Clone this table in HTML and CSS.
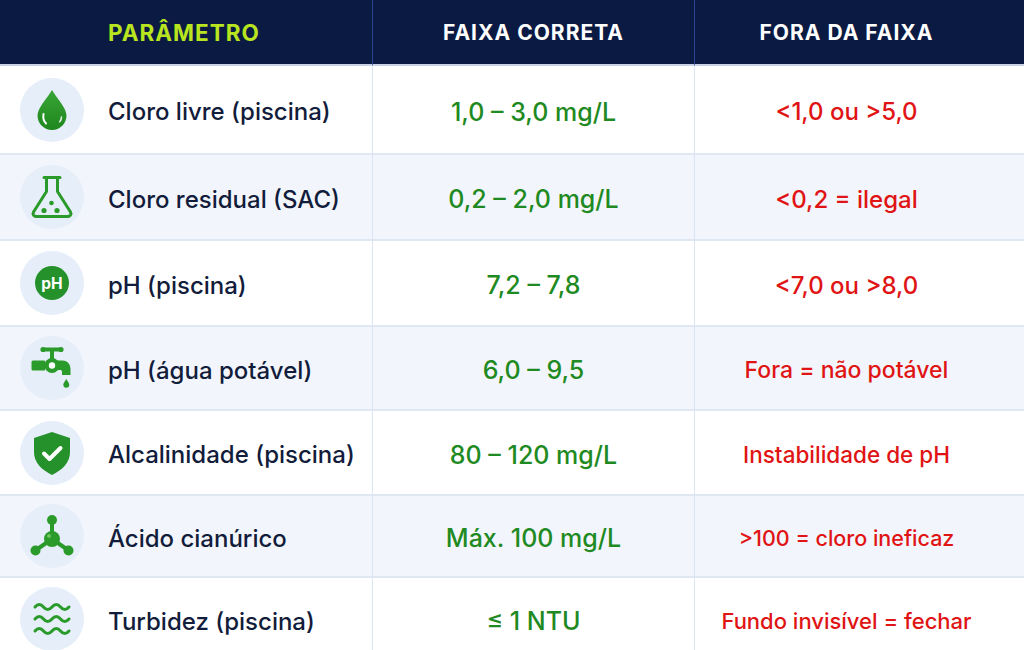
FILE: index.html
```html
<!DOCTYPE html>
<html lang="pt">
<head>
<meta charset="utf-8">
<link rel="stylesheet" href="styles.css">
</head>
<body>
<div class="table">
  <div class="hcell h1"><span class="lime">PARÂMETRO</span></div>
  <div class="hcell h2">FAIXA CORRETA</div>
  <div class="hcell h3">FORA DA FAIXA</div>

  <div class="cell param r1"><span class="ico"><svg viewBox="0 0 48 48" width="48" height="48"><defs><linearGradient id="dg" x1="0" y1="0" x2="0" y2="1"><stop offset="0" stop-color="#3aa536"/><stop offset="1" stop-color="#1e871e"/></linearGradient></defs><path d="M24 4 C20 11 9.5 22 9.5 29.5 a14.5 14.5 0 0 0 29 0 C38.5 22 28 11 24 4Z" fill="url(#dg)"/><path d="M15.5 28 q-1 6 2.5 9.5" stroke="#fff" stroke-width="2" fill="none" stroke-linecap="round"/><path d="M33.5 31 q0 3 -1.8 4.8" stroke="#fff" stroke-width="1.6" fill="none" stroke-linecap="round" opacity="0.85"/></svg></span><span class="name">Cloro livre (piscina)</span></div>
  <div class="cell ok r1">1,0 – 3,0 mg/L</div>
  <div class="cell bad c3 r1">&lt;1,0 ou &gt;5,0</div>

  <div class="cell param alt"><span class="ico"><svg viewBox="0 0 48 48" width="48" height="48"><g stroke="#2a9a2a" stroke-width="3" fill="none" stroke-linecap="round" stroke-linejoin="round"><path d="M16 4.5 h16"/><path d="M18.5 5 v13.5 L5.5 39 a3 3 0 0 0 2.6 4.5 h31.8 a3 3 0 0 0 2.6 -4.5 L29.5 18.5 V5"/></g><circle cx="16" cy="37.5" r="2.6" fill="#2a9a2a"/><circle cx="23.5" cy="30" r="2.3" fill="#2a9a2a"/><circle cx="29" cy="37.5" r="2.6" fill="#2a9a2a"/></svg></span><span class="name">Cloro residual (SAC)</span></div>
  <div class="cell ok alt">0,2 – 2,0 mg/L</div>
  <div class="cell bad c3 alt">&lt;0,2 = ilegal</div>

  <div class="cell param"><span class="ico"><svg viewBox="0 0 48 48" width="48" height="48"><circle cx="24" cy="24" r="17" fill="#24912a"/><text x="24" y="29.5" text-anchor="middle" font-family="Inter, sans-serif" font-weight="700" font-size="15.5" fill="#fff">pH</text></svg></span><span class="name">pH (piscina)</span></div>
  <div class="cell ok">7,2 – 7,8</div>
  <div class="cell bad c3">&lt;7,0 ou &gt;8,0</div>

  <div class="cell param alt"><span class="ico"><svg viewBox="0 0 48 48" width="48" height="48"><g fill="#2a9a2a"><rect x="14" y="3.5" width="20" height="4" rx="2"/><circle cx="15" cy="5.5" r="2.6"/><circle cx="33" cy="5.5" r="2.6"/><rect x="22" y="5" width="4" height="10"/><rect x="3.5" y="16.5" width="14" height="10" rx="1.5"/><path d="M27 16.5 h7.5 a8 8 0 0 1 8 8 v6.5 h-8.5 v-3.5 a1.5 1.5 0 0 0 -1.5 -1.5 h-5.5 z"/><circle cx="24" cy="21.5" r="7.5"/><path d="M38.3 35 c-1.5 2.4 -3 4.2 -3 5.8 a3 3 0 0 0 6 0 c0 -1.6 -1.5 -3.4 -3 -5.8z"/></g><circle cx="24" cy="21.5" r="3.2" fill="#fff"/></svg></span><span class="name">pH (água potável)</span></div>
  <div class="cell ok alt">6,0 – 9,5</div>
  <div class="cell bad c3 alt fora">Fora = não potável</div>

  <div class="cell param"><span class="ico"><svg viewBox="0 0 48 48" width="48" height="48"><path d="M24 3 L42 9 V23 C42 34 34 41 24 46 C14 41 6 34 6 23 V9 Z" fill="#24912a"/><path d="M16 24.5 l5.5 5.5 l11 -11" stroke="#fff" stroke-width="4" fill="none" stroke-linecap="round" stroke-linejoin="round"/></svg></span><span class="name">Alcalinidade (piscina)</span></div>
  <div class="cell ok">80 – 120 mg/L</div>
  <div class="cell bad c3 inst">Instabilidade de pH</div>

  <div class="cell param alt"><span class="ico"><svg viewBox="0 0 48 48" width="48" height="48"><path d="M24 9 V26 M24 27 L8 38 M24 27 L40 38" stroke="#2a9a2a" stroke-width="4"/><circle cx="24" cy="8" r="5" fill="#2a9a2a"/><circle cx="24" cy="27" r="8" fill="#2a9a2a"/><circle cx="7.5" cy="38.5" r="5" fill="#2a9a2a"/><circle cx="40.5" cy="38.5" r="5" fill="#2a9a2a"/><circle cx="21" cy="24" r="2" fill="#6fc45f"/></svg></span><span class="name">Ácido cianúrico</span></div>
  <div class="cell ok alt">Máx. 100 mg/L</div>
  <div class="cell bad c3 alt cl">&gt;100 = cloro ineficaz</div>

  <div class="cell param"><span class="ico"><svg viewBox="0 0 48 48" width="48" height="48"><g stroke="#2a9a2a" stroke-width="3" fill="none" stroke-linecap="round"><path d="M7 12 q4.25 -5 8.5 0 t8.5 0 t8.5 0 t8.5 0"/><path d="M7 24 q4.25 -5 8.5 0 t8.5 0 t8.5 0 t8.5 0"/><path d="M7 36 q4.25 -5 8.5 0 t8.5 0 t8.5 0 t8.5 0"/></g></svg></span><span class="name">Turbidez (piscina)</span></div>
  <div class="cell ok">≤ 1 NTU</div>
  <div class="cell bad c3 fundo">Fundo invisível = fechar</div>
</div>
</body>
</html>
```

FILE: styles.css
```css
* { box-sizing: border-box; }
html, body { margin: 0; padding: 0; }
body {
  width: 1024px;
  height: 650px;
  overflow: hidden;
  background: #ffffff;
  font-family: Inter, "Open Sans", sans-serif;
}
.table {
  display: grid;
  grid-template-columns: 372px 322px 330px;
  grid-template-rows: 66px 89px 86px 86px 84px 85px 82px 84px;
}
.hcell {
  background: #0b1a42;
  color: #ffffff;
  font-weight: 700;
  font-size: 21px;
  letter-spacing: 1px;
  display: flex;
  align-items: center;
  justify-content: center;
  border-bottom: 2px solid #c9d3e6;
}
.h1 { justify-content: flex-start; padding-left: 108px; font-size: 22.5px; }
.h2, .h3 { border-left: 1px solid #2a4690; }
.h3 { padding-right: 26px; }
.lime { color: #b8e51f; }
.cell {
  display: flex;
  align-items: center;
  justify-content: center;
  background: #ffffff;
  border-bottom: 2px solid #dfe7f3;
  font-size: 24px;
  font-weight: 500;
  padding-top: 4px;
}
.cell.alt { background: #f2f6fc; }
.cell.ok, .cell.bad { border-left: 1px solid #dbe4f2; }
.cell.c3 { padding-right: 26px; }
.cell.param {
  justify-content: flex-start;
  padding-left: 20px;
  padding-top: 0;
  gap: 24px;
  color: #121c3b;
}
.name { padding-top: 4px; white-space: nowrap; }
.ok { color: #1f8a22; font-size: 25px; }
.bad { color: #e01414; }
.fora { font-size: 23px; }
.inst { font-size: 22.5px; }
.cl { font-size: 21.5px; }
.fundo { font-size: 22px; }
.ico {
  width: 64px;
  height: 64px;
  border-radius: 50%;
  background: #e6eef9;
  display: flex;
  align-items: center;
  justify-content: center;
  flex: none;
}
```
